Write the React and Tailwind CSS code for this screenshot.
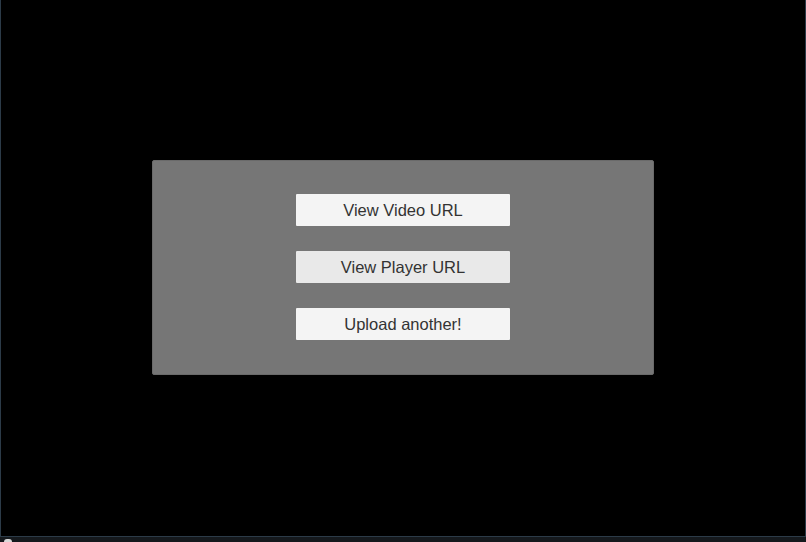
export default function App() {
  const buttons = [
    { label: "View Video URL", bg: "bg-[#f4f4f4]" },
    { label: "View Player URL", bg: "bg-[#e9e9e9]" },
    { label: "Upload another!", bg: "bg-[#f4f4f4]" },
  ];
  return (
    <div className="w-[806px] h-[542px] flex flex-col bg-black" style={{ fontFamily: '"Liberation Sans", Arial, sans-serif' }}>
      <div className="flex-1 flex items-center justify-center border-l border-r border-b border-[#2c3b48] pb-[4px]">
        <div className="w-[502px] h-[215px] bg-[#767676] rounded-[2px] border border-[#6a6a6a] flex flex-col items-center justify-center gap-[25px] mt-[2px]">
          {buttons.map((b) => (
            <button
              key={b.label}
              className={`w-[214px] h-[32px] ${b.bg} rounded-[1px] text-[16.5px] text-[#333333] flex items-center justify-center`}
            >
              {b.label}
            </button>
          ))}
        </div>
      </div>
      <div className="h-[5px] bg-[#15191d] flex items-end pl-[4px]">
        <div className="w-[8px] h-[3px] bg-[#d8d8d8] rounded-t-full" />
      </div>
    </div>
  );
}
